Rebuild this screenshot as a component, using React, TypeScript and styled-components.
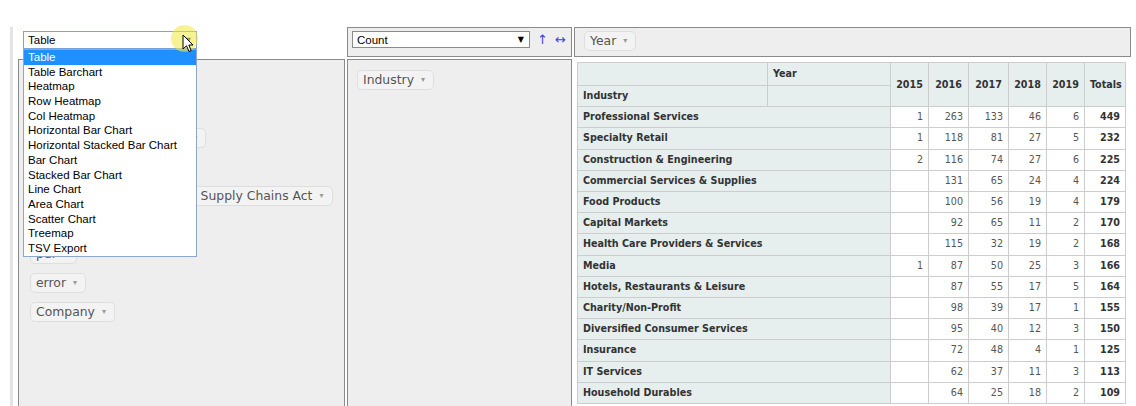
import React from 'react';
import styled, { createGlobalStyle } from 'styled-components';

const Global = createGlobalStyle`
  html, body { margin: 0; padding: 0; background: #ffffff; }
  body { font-family: "DejaVu Sans", Verdana, sans-serif; }
  * { box-sizing: border-box; }
`;

const Page = styled.div`
  height: 406px;
  overflow: hidden;
  padding: 27px 0 0 10px;
`;

const Frame = styled.div`
  height: 100%;
  border-left: 3px solid #e4e4e4;
  padding-left: 5px;
`;

const Ui = styled.div`
  display: grid;
  grid-template-columns: 327px 225px 557px;
  grid-template-rows: 30px 420px;
  gap: 2px;
`;

const RendererCell = styled.div`
  position: relative;
  padding: 4px 5px;
  background: #fff;
`;

const Cell = styled.div<{ $pad: string }>`
  background: #eeeeee;
  border: 1px solid #8a8a8a;
  padding: ${(p) => p.$pad};
`;

const RowCell = styled.div`
  display: flex;
  align-items: center;
  gap: 7px;
`;

const SelectBox = styled.div<{ $w: number; $h: number; $border: string }>`
  width: ${(p) => p.$w}px;
  height: ${(p) => p.$h}px;
  border: 1px solid ${(p) => p.$border};
  background: #fff;
  display: flex;
  align-items: center;
  justify-content: space-between;
  padding: 0 5px 0 4px;
  font-family: "Liberation Sans", Arial, sans-serif;
  font-size: 11.5px;
  color: #000;
`;

const SelArrow = styled.span<{ $color: string }>`
  font-size: 8px;
  color: ${(p) => p.$color};
  font-family: "DejaVu Sans", sans-serif;
`;

const OrderLink = styled.span`
  color: #3344ee;
  font-size: 13px;
  font-family: "DejaVu Sans", sans-serif;
  line-height: 1;
`;

const OrderLinks = styled.div`
  display: flex;
  gap: 7px;
  align-items: center;
`;

const DropList = styled.ul`
  position: absolute;
  left: 5px;
  top: 22px;
  width: 174px;
  margin: 0;
  padding: 0;
  list-style: none;
  background: #fff;
  border: 1px solid #8fa6cc;
  z-index: 10;
`;

const DropItem = styled.li<{ $active?: boolean }>`
  height: 14.7px;
  line-height: 14.7px;
  padding-left: 4px;
  font-family: "Liberation Sans", Arial, sans-serif;
  font-size: 11.5px;
  color: ${(p) => (p.$active ? '#fff' : '#000')};
  background: ${(p) => (p.$active ? '#1e90ff' : '#fff')};
  white-space: nowrap;
`;

const Highlight = styled.div`
  position: absolute;
  left: 153px;
  top: -2px;
  width: 27px;
  height: 27px;
  border-radius: 50%;
  background: rgba(240, 234, 60, 0.55);
  z-index: 20;
`;

const Cursor = styled.svg`
  position: absolute;
  left: 164px;
  top: 7px;
  z-index: 21;
`;

const AttrList = styled.div<{ $dir: 'row' | 'column'; $gap: number }>`
  display: flex;
  flex-direction: ${(p) => p.$dir};
  align-items: flex-start;
  gap: ${(p) => p.$gap}px;
`;

const Attr = styled.span`
  display: inline-flex;
  align-items: center;
  background: #f3f3f3;
  border: 1px solid #dedede;
  border-radius: 5px;
  padding: 1px 8px 1px 5px;
  font-family: "DejaVu Sans", Verdana, sans-serif;
  font-size: 12.4px;
  line-height: 16px;
  color: #555;
  white-space: nowrap;
`;

const Tri = styled.span`
  font-size: 8px;
  color: #9a9a9a;
  margin-left: 7px;
`;

const AreaCell = styled.div`
  padding: 3px;
  background: #fff;
`;

const PvtTable = styled.table`
  border-collapse: collapse;
  table-layout: fixed;
  width: 548px;
  font-family: "DejaVu Sans Condensed", "DejaVu Sans", Verdana, sans-serif;
  font-size: 10.67px;
`;

const Th = styled.th<{ $align?: string }>`
  background: #e6eeee;
  border: 1px solid #cdcdcd;
  padding: 4px 5px;
  line-height: 12.2px;
  text-align: ${(p) => p.$align || 'left'};
  color: #333;
  font-weight: bold;
  white-space: nowrap;
  overflow: hidden;
`;

const Td = styled.td<{ $total?: boolean }>`
  background: #fff;
  border: 1px solid #cdcdcd;
  padding: 4px 5px;
  line-height: 12.2px;
  text-align: right;
  color: ${(p) => (p.$total ? '#333' : '#555')};
  font-weight: ${(p) => (p.$total ? 'bold' : 'normal')};
`;

const HeadRow = styled.tr<{ $h: number }>`
  height: ${(p) => p.$h}px;
`;

const renderers = [
  'Table',
  'Table Barchart',
  'Heatmap',
  'Row Heatmap',
  'Col Heatmap',
  'Horizontal Bar Chart',
  'Horizontal Stacked Bar Chart',
  'Bar Chart',
  'Stacked Bar Chart',
  'Line Chart',
  'Area Chart',
  'Scatter Chart',
  'Treemap',
  'TSV Export',
];

const unused = [
  'Period',
  'Statement',
  'Statement Published On',
  'Turnover',
  'California Transparency in Supply Chains Act',
  'Signatory',
  'pur',
  'error',
  'Company',
];

const years = ['2015', '2016', '2017', '2018', '2019'];
const colWidths = [190, 123, 38, 40, 40, 38, 38, 41];

const rows: [string, (number | '')[], number][] = [
  ['Professional Services', [1, 263, 133, 46, 6], 449],
  ['Specialty Retail', [1, 118, 81, 27, 5], 232],
  ['Construction & Engineering', [2, 116, 74, 27, 6], 225],
  ['Commercial Services & Supplies', ['', 131, 65, 24, 4], 224],
  ['Food Products', ['', 100, 56, 19, 4], 179],
  ['Capital Markets', ['', 92, 65, 11, 2], 170],
  ['Health Care Providers & Services', ['', 115, 32, 19, 2], 168],
  ['Media', [1, 87, 50, 25, 3], 166],
  ['Hotels, Restaurants & Leisure', ['', 87, 55, 17, 5], 164],
  ['Charity/Non-Profit', ['', 98, 39, 17, 1], 155],
  ['Diversified Consumer Services', ['', 95, 40, 12, 3], 150],
  ['Insurance', ['', 72, 48, 4, 1], 125],
  ['IT Services', ['', 62, 37, 11, 3], 113],
  ['Household Durables', ['', 64, 25, 18, 2], 109],
];

export default function App() {
  return (
    <>
      <Global />
      <Page>
        <Frame>
          <Ui>
            <RendererCell>
              <SelectBox $w={174} $h={18} $border="#7aa3dc">
                <span>Table</span>
                <SelArrow $color="#3a3a10">▼</SelArrow>
              </SelectBox>
              <DropList>
                {renderers.map((r, i) => (
                  <DropItem key={r} $active={i === 0}>
                    {r}
                  </DropItem>
                ))}
              </DropList>
              <Highlight />
              <Cursor width="13" height="20" viewBox="0 0 13 20">
                <path
                  d="M1 1 L1 15 L4.5 11.8 L7 17.5 L9.2 16.5 L6.8 11 L11 11 Z"
                  fill="#fff"
                  stroke="#000"
                  strokeWidth="1"
                  strokeLinejoin="round"
                />
              </Cursor>
            </RendererCell>

            <Cell $pad="3px 4px">
              <RowCell>
                <SelectBox $w={178} $h={17} $border="#8c8c8c">
                  <span>Count</span>
                  <SelArrow $color="#000">▼</SelArrow>
                </SelectBox>
                <OrderLinks>
                  <OrderLink>↑</OrderLink>
                  <OrderLink>↔</OrderLink>
                </OrderLinks>
              </RowCell>
            </Cell>

            <Cell $pad="3px 9px">
              <AttrList $dir="row" $gap={8}>
                <Attr>
                  Year<Tri>▾</Tri>
                </Attr>
              </AttrList>
            </Cell>

            <Cell $pad="10px 11px">
              <AttrList $dir="column" $gap={9}>
                {unused.map((u) => (
                  <Attr key={u}>
                    {u}
                    <Tri>▾</Tri>
                  </Attr>
                ))}
              </AttrList>
            </Cell>

            <Cell $pad="10px 9px">
              <AttrList $dir="column" $gap={9}>
                <Attr>
                  Industry<Tri>▾</Tri>
                </Attr>
              </AttrList>
            </Cell>

            <AreaCell>
              <PvtTable>
                <colgroup>
                  {colWidths.map((w, i) => (
                    <col key={i} style={{ width: w }} />
                  ))}
                </colgroup>
                <thead>
                  <HeadRow $h={23}>
                    <Th />
                    <Th>Year</Th>
                    {years.map((y) => (
                      <Th key={y} rowSpan={2} $align="center">
                        {y}
                      </Th>
                    ))}
                    <Th rowSpan={2} $align="center">
                      Totals
                    </Th>
                  </HeadRow>
                  <HeadRow $h={21}>
                    <Th>Industry</Th>
                    <Th />
                  </HeadRow>
                </thead>
                <tbody>
                  {rows.map(([name, vals, total]) => (
                    <tr key={name}>
                      <Th colSpan={2}>{name}</Th>
                      {vals.map((v, i) => (
                        <Td key={i}>{v}</Td>
                      ))}
                      <Td $total>{total}</Td>
                    </tr>
                  ))}
                </tbody>
              </PvtTable>
            </AreaCell>
          </Ui>
        </Frame>
      </Page>
    </>
  );
}
